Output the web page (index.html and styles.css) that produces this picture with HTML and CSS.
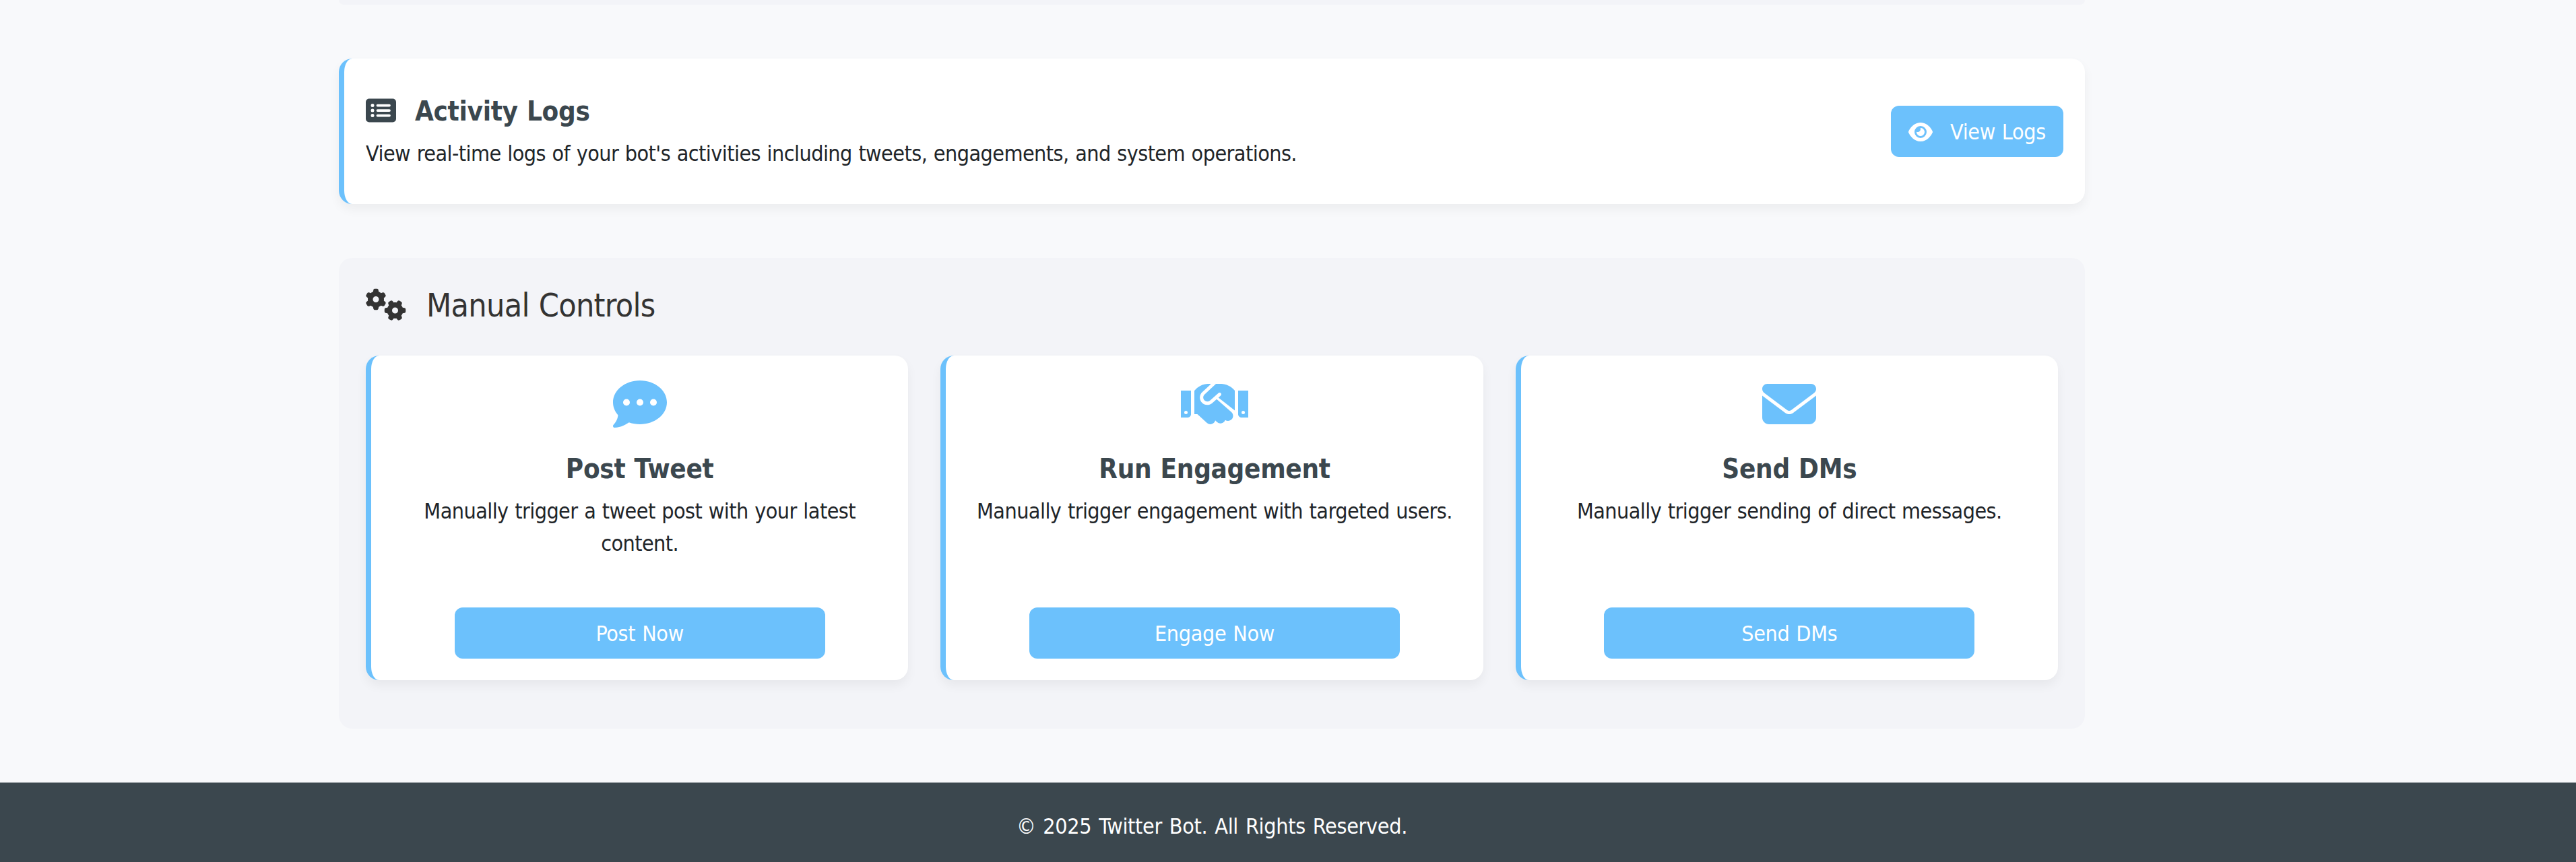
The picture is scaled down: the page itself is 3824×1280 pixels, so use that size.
FILE: index.html
```html
<!DOCTYPE html>
<html lang="en">
<head>
<meta charset="utf-8">
<title>Twitter Bot</title>
<link rel="stylesheet" href="styles.css">
</head>
<body>
<main class="container">
  <section class="panel panel-previous"></section>

  <section class="log-card">
    <div class="log-info">
      <h3 class="card-title log-title">
        <svg class="icon-list" viewBox="0 0 576 512" fill="currentColor"><path fill-rule="evenodd" d="M64 32H512a64 64 0 0 1 64 64V416a64 64 0 0 1-64 64H64a64 64 0 0 1-64-64V96A64 64 0 0 1 64 32zM96 160a32 32 0 1 0 64 0a32 32 0 1 0-64 0zM96 256a32 32 0 1 0 64 0a32 32 0 1 0-64 0zM96 352a32 32 0 1 0 64 0a32 32 0 1 0-64 0zM224 136a24 24 0 0 0 0 48H448a24 24 0 0 0 0-48zM224 232a24 24 0 0 0 0 48H448a24 24 0 0 0 0-48zM224 328a24 24 0 0 0 0 48H448a24 24 0 0 0 0-48z"/></svg>
        <span>Activity Logs</span>
      </h3>
      <p class="text">View real-time logs of your bot's activities including tweets, engagements, and system operations.</p>
    </div>
    <a class="btn btn-logs">
      <svg class="icon-eye" viewBox="0 0 576 512" fill="currentColor"><path d="M288 32c-80.800 0-145.500 36.800-192.600 80.600C48.600 156 17.300 208 2.500 243.700c-3.300 7.900-3.300 16.700 0 24.600C17.300 304 48.600 356 95.400 399.400C142.500 443.200 207.200 480 288 480s145.500-36.800 192.600-80.600c46.800-43.500 78.100-95.400 93-131.100c3.300-7.900 3.300-16.700 0-24.600c-14.900-35.700-46.200-87.700-93-131.100C433.500 68.800 368.800 32 288 32zM144 256a144 144 0 1 1 288 0 144 144 0 1 1 -288 0zm144-64c0 35.300-28.700 64-64 64c-7.100 0-13.900-1.200-20.300-3.300c-5.500-1.800-11.900 1.600-11.700 7.400c.3 6.900 1.300 13.800 3.200 20.700c13.700 51.200 66.400 81.600 117.600 67.900s81.600-66.400 67.900-117.600c-11.100-41.500-47.800-69.400-88.600-71.100c-5.800-.2-9.200 6.100-7.400 11.700c2.100 6.400 3.300 13.200 3.300 20.300z"/></svg>
      <span>View Logs</span>
    </a>
  </section>

  <section class="panel">
    <h2 class="panel-title">
      <svg class="icon-gears" viewBox="0 0 640 512" fill="currentColor"><path d="M308.500 135.300c7.100-6.300 9.900-16.200 6.200-25c-2.300-5.300-4.800-10.500-7.600-15.500L304 89.400c-3-5-6.300-9.900-9.800-14.600c-5.700-7.600-15.700-10.100-24.700-7.100l-28.200 9.300c-10.700-8.800-23-16-36.200-20.900L199 27.100c-1.900-9.300-9.100-16.700-18.500-17.800C173.900 8.400 167.200 8 160.400 8h-.7c-6.800 0-13.500 .4-20.100 1.200c-9.400 1.100-16.600 8.600-18.500 17.800L115 56.100c-13.300 5-25.500 12.100-36.200 20.900L50.500 67.800c-9-3-19-.5-24.700 7.100c-3.500 4.700-6.800 9.600-9.900 14.600l-3 5.300c-2.800 5-5.300 10.200-7.600 15.600c-3.700 8.700-.9 18.600 6.200 25l22.200 19.800C32.600 161.900 32 168.900 32 176s.6 14.100 1.700 20.900L11.500 216.700c-7.100 6.300-9.900 16.200-6.200 25c2.300 5.300 4.800 10.500 7.600 15.600l3 5.200c3 5.100 6.300 9.900 9.900 14.600c5.700 7.600 15.700 10.100 24.700 7.100l28.200-9.300c10.700 8.800 23 16 36.200 20.900l6.100 29.100c1.900 9.300 9.100 16.700 18.500 17.800c6.700 .8 13.500 1.200 20.400 1.200s13.700-.4 20.400-1.200c9.400-1.100 16.600-8.600 18.500-17.800l6.100-29.100c13.300-5 25.500-12.100 36.200-20.900l28.200 9.300c9 3 19 .5 24.700-7.100c3.500-4.700 6.800-9.500 9.800-14.600l3.100-5.400c2.800-5 5.300-10.200 7.600-15.500c3.700-8.700 .9-18.600-6.200-25l-22.200-19.800c1.100-6.800 1.700-13.800 1.700-20.900s-.6-14.100-1.700-20.900l22.200-19.800zM112 176a48 48 0 1 1 96 0 48 48 0 1 1 -96 0zM504.700 500.500c6.300 7.100 16.200 9.900 25 6.200c5.300-2.300 10.500-4.800 15.500-7.600l5.400-3.100c5-3 9.900-6.300 14.600-9.800c7.600-5.700 10.100-15.700 7.100-24.700l-9.300-28.200c8.800-10.700 16-23 20.900-36.200l29.100-6.100c9.300-1.900 16.700-9.100 17.800-18.500c.8-6.700 1.200-13.500 1.200-20.400s-.4-13.700-1.200-20.400c-1.100-9.400-8.600-16.600-17.800-18.500L583.900 307c-5-13.300-12.100-25.500-20.900-36.200l9.300-28.200c3-9 .5-19-7.100-24.700c-4.700-3.500-9.600-6.800-14.600-9.900l-5.300-3c-5-2.800-10.200-5.300-15.600-7.600c-8.700-3.700-18.600-.9-25 6.200l-19.800 22.200c-6.800-1.100-13.800-1.700-20.900-1.700s-14.100 .6-20.900 1.700l-19.800-22.200c-6.300-7.100-16.200-9.900-25-6.200c-5.300 2.300-10.500 4.800-15.600 7.600l-5.200 3c-5.100 3-9.900 6.300-14.600 9.900c-7.600 5.700-10.100 15.700-7.100 24.700l9.300 28.200c-8.800 10.700-16 23-20.900 36.200L315.100 313c-9.300 1.900-16.700 9.100-17.800 18.500c-.8 6.700-1.200 13.500-1.200 20.400s.4 13.700 1.200 20.400c1.100 9.400 8.600 16.600 17.800 18.500l29.100 6.100c5 13.300 12.100 25.500 20.900 36.200l-9.300 28.200c-3 9-.5 19 7.100 24.700c4.700 3.500 9.500 6.800 14.600 9.800l5.400 3.100c5 2.800 10.200 5.300 15.500 7.600c8.700 3.700 18.600 .9 25-6.200l19.800-22.200c6.800 1.100 13.800 1.700 20.900 1.700s14.100-.6 20.900-1.700l19.800 22.200zM464 304a48 48 0 1 1 0 96 48 48 0 1 1 0-96z"/></svg>
      <span>Manual Controls</span>
    </h2>
    <div class="cards">
      <article class="card">
        <svg class="icon-card" viewBox="0 0 512 512" fill="currentColor"><path d="M256 448c141.400 0 256-93.100 256-208S397.400 32 256 32S0 125.100 0 240c0 45.100 17.700 86.800 47.700 120.900c-1.900 24.500-11.400 46.300-21.400 62.900c-5.500 9.200-11.100 16.600-15.200 21.600c-2.100 2.500-3.700 4.400-4.900 5.700c-.6 .6-1 1.100-1.300 1.400l-.3 .3c-4.600 4.600-5.900 11.400-3.400 17.400c2.500 6 8.300 9.900 14.800 9.900c28.700 0 57.600-8.900 81.600-19.300c22.900-10 42.400-21.900 54.300-30.600c31.800 11.500 67 17.900 104.100 17.900zM128 208a32 32 0 1 1 0 64 32 32 0 1 1 0-64zm128 0a32 32 0 1 1 0 64 32 32 0 1 1 0-64zm96 32a32 32 0 1 1 64 0 32 32 0 1 1 -64 0z"/></svg>
        <h3 class="card-title">Post Tweet</h3>
        <p class="text">Manually trigger a tweet post with your latest content.</p>
        <a class="btn btn-card">Post Now</a>
      </article>
      <article class="card">
        <svg class="icon-card" viewBox="0 0 640 512" fill="currentColor"><path d="M331 66L226.600 163.600c-16.100 13-19.200 36.400-7 53.100c12.900 17.800 38 21.300 55.300 7.800l83-74c7-5.400 17-4.200 22.500 2.800s4.200 17-2.800 22.500l-20.900 20L512 316.800V128C478 88 430 64 383.400 64H340c-4 0-6 0-9 2zM340 209.600l-45.500 40.200C263 274.300 217.300 268 193.700 235.600c-22.200-30.500-16.600-73.100 12.700-96.800L286 66c-10-2-22-2-33.200-2C205 66 160 90 128 130V352h28.200l91.400 83.400c19.600 17.900 49.900 16.500 67.800-3.100c5.500-6.100 9.200-13.200 11.100-20.600l17 15.600c19.500 17.900 49.900 16.600 67.800-2.900c4.500-4.900 7.800-10.600 9.900-16.500c19.400 13 45.800 10.300 62.100-7.500c17.900-19.500 16.600-49.900-2.900-67.800zM0 128V384H64c17.700 0 32-14.300 32-32V128H0zM48 320a16 16 0 1 1 0 32 16 16 0 1 1 0-32zM544 128V352c0 17.700 14.300 32 32 32h64V128H544zm32 208a16 16 0 1 1 32 0 16 16 0 1 1 -32 0z"/></svg>
        <h3 class="card-title">Run Engagement</h3>
        <p class="text">Manually trigger engagement with targeted users.</p>
        <a class="btn btn-card">Engage Now</a>
      </article>
      <article class="card">
        <svg class="icon-card" viewBox="0 0 512 512" fill="currentColor"><path d="M48 64C21.500 64 0 85.500 0 112c0 15.100 7.100 29.300 19.200 38.400L236.800 313.600c11.400 8.500 27 8.500 38.400 0L492.800 150.400c12.100-9.100 19.200-23.300 19.200-38.400c0-26.500-21.500-48-48-48H48zM0 176V384c0 35.300 28.700 64 64 64H448c35.300 0 64-28.700 64-64V176L294.400 339.200c-22.800 17.100-54 17.100-76.800 0L0 176z"/></svg>
        <h3 class="card-title">Send DMs</h3>
        <p class="text">Manually trigger sending of direct messages.</p>
        <a class="btn btn-card">Send DMs</a>
      </article>
    </div>
  </section>
</main>
<footer class="footer">
  <p class="copyright">© 2025 Twitter Bot. All Rights Reserved.</p>
</footer>
</body>
</html>
```
FILE: styles.css
```css
* {
  box-sizing: border-box;
}

body {
  margin: 0;
  background: #f8f9fb;
  color: #212529;
  font: 32px/48px "DejaVu Sans Condensed", "DejaVu Sans", sans-serif;
  font-stretch: condensed;
  letter-spacing: -.55px;
  word-spacing: 1px;
  height: 1280px;
  overflow: hidden;
}

h2, h3, p {
  margin: 0;
}

svg {
  display: block;
  flex: none;
}

.container {
  width: 2592px;
  margin-left: 503px;
  height: 1162px;
}

.panel {
  height: 699px;
  padding: 40px;
  border-radius: 20px;
  background: #f3f4f8;
}

.panel-previous {
  height: 7px;
  padding: 0;
  border-radius: 0 0 20px 20px;
}

.log-card {
  display: flex;
  align-items: center;
  justify-content: space-between;
  height: 216px;
  margin: 80px 0;
  padding: 0 32px;
  border-left: 8px solid #6cc1fc;
  border-radius: 20px;
  background: #fff;
  box-shadow: 0 8px 16px rgba(0, 0, 0, .05);
}

.log-info {
  padding-top: 3px;
}

.card-title {
  color: #3b474e;
  font-size: 40px;
  line-height: 48px;
  font-weight: 700;
  letter-spacing: -.3px;
}

.log-title {
  display: flex;
  align-items: center;
  gap: 28px;
  margin-bottom: 15px;
}

.icon-list {
  width: 45px;
  height: 40px;
  margin-bottom: 2px;
}

.btn {
  display: flex;
  align-items: center;
  justify-content: center;
  height: 76px;
  padding-top: 1px;
  border-radius: 12px;
  background: #6cc1fc;
  color: #fff;
  letter-spacing: -.3px;
}

.btn-logs {
  width: 256px;
  gap: 26px;
}

.icon-eye {
  width: 36px;
  height: 32px;
}

.panel-title {
  display: flex;
  align-items: center;
  gap: 30px;
  height: 58px;
  margin-bottom: 47px;
  color: #333;
  font-size: 48px;
  font-weight: 400;
  letter-spacing: -.7px;
}

.panel-title span {
  padding-top: 2px;
}

.icon-gears {
  width: 60px;
  height: 48px;
}

.cards {
  display: grid;
  grid-template-columns: repeat(3, 1fr);
  gap: 48px;
}

.card {
  display: flex;
  flex-direction: column;
  align-items: center;
  height: 482px;
  padding: 32px;
  border-left: 8px solid #6cc1fc;
  border-radius: 20px;
  background: #fff;
  box-shadow: 0 8px 16px rgba(0, 0, 0, .05);
  text-align: center;
}

.icon-card {
  height: 80px;
  margin-bottom: 32px;
  color: #6cc1fc;
}

.card .card-title {
  margin-bottom: 15px;
}

.btn-card {
  width: 75%;
  margin-top: auto;
}

.footer {
  height: 118px;
  padding: 41px 226px 0 0;
  background: #3b474e;
  color: #fff;
  letter-spacing: -.3px;
  word-spacing: 2px;
  text-align: center;
}
```
